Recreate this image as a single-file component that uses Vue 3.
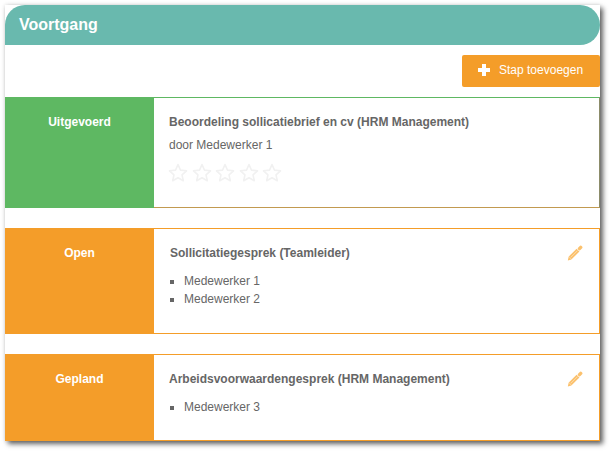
<script setup>
const steps = [
  { status: 'Uitgevoerd', tone: 'done', title: 'Beoordeling sollicatiebrief en cv (HRM Management)', by: 'door Medewerker 1', rating: true, height: 111 },
  { status: 'Open', tone: 'todo', title: 'Sollicitatiegesprek (Teamleider)', people: ['Medewerker 1', 'Medewerker 2'], edit: true, height: 106, nudge: true },
  { status: 'Gepland', tone: 'todo', title: 'Arbeidsvoorwaardengesprek (HRM Management)', people: ['Medewerker 3'], edit: true, height: 87 }
]
</script>

<template>
  <div class="page">
    <section class="panel">
      <header class="head">Voortgang</header>
      <div class="actions">
        <button class="add" type="button">
          <svg class="plus" width="12" height="12" viewBox="0 0 12 12"><path d="M4 0h4v4h4v4H8v4H4V8H0V4h4z" fill="#fff"/></svg>
          <span>Stap toevoegen</span>
        </button>
      </div>
      <div class="steps">
        <article v-for="s in steps" :key="s.status" class="step" :class="s.tone" :style="{ height: s.height + 'px' }">
          <div class="status">{{ s.status }}</div>
          <div class="body">
            <h3 class="title" :class="{ nudge: s.nudge }">{{ s.title }}</h3>
            <p v-if="s.by" class="by">{{ s.by }}</p>
            <div v-if="s.rating" class="stars">
              <svg v-for="n in 5" :key="n" width="20" height="20" viewBox="0 0 20 20">
                <path d="M10 1.6l2.5 5.5 6 .7-4.45 4.05 1.2 5.9L10 14.8l-5.25 2.95 1.2-5.9L1.5 7.8l6-.7z" fill="none" stroke="#f1f1f1" stroke-width="1.6" stroke-linejoin="round"/>
              </svg>
            </div>
            <ul v-if="s.people" class="people">
              <li v-for="p in s.people" :key="p">{{ p }}</li>
            </ul>
            <svg v-if="s.edit" class="pencil" width="16" height="16" viewBox="0 0 16 16">
              <path d="M0.8 15.4l.9-3.9 2.9 2.9z" fill="#fbc16d"/>
              <path d="M3.2 12.9l7.8-7.8" stroke="#fbc16d" stroke-width="4"/>
              <path d="M12.5 3.6l1.2-1.2" stroke="#fbc16d" stroke-width="3.4" stroke-linecap="round"/>
              <path d="M3.8 12.3l6.8-6.8" stroke="#fff" stroke-width=".6" opacity=".7"/>
            </svg>
          </div>
        </article>
      </div>
    </section>
  </div>
</template>

<style scoped>
.page {
  width: 609px;
  height: 451px;
  padding: 5px 0 0 5px;
  box-sizing: border-box;
  overflow: hidden;
  font-family: "Liberation Sans", Arial, sans-serif;
}
.panel {
  width: 595px;
  height: 436px;
  background: #fff;
  box-shadow: 3px 3px 5px 0 rgba(0, 0, 0, 0.6), 0 0 4px rgba(0, 0, 0, 0.14);
}
.head {
  height: 40px;
  box-sizing: border-box;
  padding-left: 14px;
  line-height: 40px;
  background: #69b9ae;
  color: #fff;
  font-size: 16px;
  font-weight: 700;
  border-radius: 20px 20px 20px 0;
}
.actions {
  display: flex;
  justify-content: flex-end;
  padding-top: 10px;
  height: 52px;
  box-sizing: border-box;
}
.add {
  width: 138px;
  height: 32px;
  display: flex;
  align-items: center;
  gap: 9px;
  padding: 0 0 2px 16px;
  border: 0;
  border-radius: 2px;
  background: #f49d29;
  color: #fff;
  font: 12px "Liberation Sans", Arial, sans-serif;
}
.plus { flex: none; }
.steps {
  display: flex;
  flex-direction: column;
  gap: 20px;
}
.step {
  display: flex;
  box-sizing: border-box;
}
.status {
  width: 149px;
  flex: none;
  padding-top: 18px;
  text-align: center;
  color: #fff;
  font-size: 12px;
  font-weight: 700;
  line-height: 14px;
}
.body {
  position: relative;
  flex: 1;
  box-sizing: border-box;
  padding: 17px 15px 0;
  color: #666;
  font-size: 12px;
  border-style: solid;
  border-width: 1px 1px 1px 0;
}
.done .status { background: #5eb862; }
.done .body { border-color: #5eb862 #8c8c6a #c29a50; }
.todo .status { background: #f49d29; }
.todo .body { border-color: #f49d29; }
.title {
  margin: 0;
  font-size: 12px;
  font-weight: 700;
  line-height: 14px;
}
.title.nudge { margin-left: 1px; }
.by {
  margin: 9px 0 0;
  line-height: 14px;
}
.stars {
  display: flex;
  gap: 3.6px;
  margin-top: 11px;
  margin-left: -1px;
}
.people {
  margin: 12px 0 0;
  padding: 0 0 0 15px;
  list-style: square;
  line-height: 18px;
}
.pencil {
  position: absolute;
  top: 16px;
  right: 16px;
}
</style>
